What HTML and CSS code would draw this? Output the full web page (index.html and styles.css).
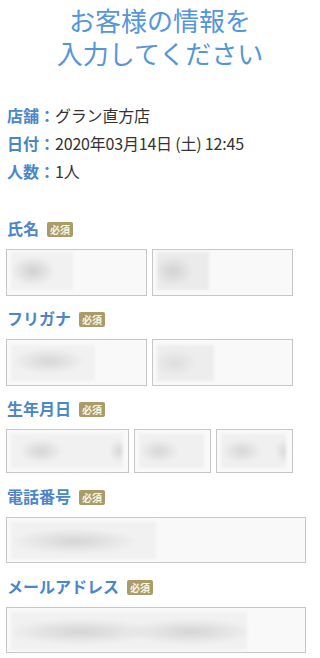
FILE: index.html
```html
<!DOCTYPE html>
<html lang="ja">
<head>
<meta charset="utf-8">
<title>お客様の情報を入力してください</title>
<link rel="stylesheet" href="styles.css">
</head>
<body>
<main class="page">
  <h1 class="title"><span class="tline">お客様の情報を</span><span class="tline">入力してください</span></h1>

  <dl class="info">
    <div class="info-row"><dt>店舗：</dt><dd>グラン直方店</dd></div>
    <div class="info-row"><dt>日付：</dt><dd>2020年03月14日 (土) 12:45</dd></div>
    <div class="info-row"><dt>人数：</dt><dd>1人</dd></div>
  </dl>

  <form class="form">
    <div class="field first">
      <div class="label">氏名<span class="req">必須</span></div>
      <div class="row">
        <div class="input w141 h47"><span class="fill f-name1"></span></div>
        <div class="input w141 h47"><span class="fill f-name2"></span></div>
      </div>
    </div>
    <div class="field">
      <div class="label">フリガナ<span class="req">必須</span></div>
      <div class="row">
        <div class="input w141 h47"><span class="fill f-kana1"></span></div>
        <div class="input w141 h47"><span class="fill f-kana2"></span></div>
      </div>
    </div>
    <div class="field">
      <div class="label">生年月日<span class="req">必須</span></div>
      <div class="row">
        <div class="input w123 h44"><span class="fill f-b1"></span></div>
        <div class="input w77 h44"><span class="fill f-b2"></span></div>
        <div class="input w77 h44"><span class="fill f-b3"></span></div>
      </div>
    </div>
    <div class="field wide">
      <div class="label">電話番号<span class="req">必須</span></div>
      <div class="row">
        <div class="input w300 h46"><span class="fill f-tel"></span></div>
      </div>
    </div>
    <div class="field wide">
      <div class="label">メールアドレス<span class="req">必須</span></div>
      <div class="row">
        <div class="input w300 h46"><span class="fill f-mail"></span></div>
      </div>
    </div>
  </form>
</main>
</body>
</html>
```

FILE: styles.css
```css
* { box-sizing: border-box; }

html, body {
  margin: 0;
  padding: 0;
  background: #ffffff;
}

body {
  font-family: "Noto Sans CJK JP", "Noto Sans", sans-serif;
  color: #333333;
}

.page {
  width: 320px;
  padding: 3px 6px 0 6px;
}

.title {
  margin: 0;
  font-size: 26px;
  font-weight: 400;
  text-align: center;
  color: #5596d8;
}

.tline {
  display: block;
  height: 33px;
  line-height: 33px;
}

.info {
  margin: 32px 0 0 1px;
  padding: 0;
}

.info-row {
  display: flex;
  font-size: 16px;
  line-height: 28px;
}

.info-row dt {
  font-weight: 700;
  color: #4a86c8;
}

.info-row dd {
  margin: 0;
  color: #333333;
  letter-spacing: -0.2px;
}

.form {
  margin: 0;
}

.field {
  margin-top: 12px;
}

.field.first {
  margin-top: 33px;
}

.field.wide {
  margin-top: 13px;
}

.label {
  display: flex;
  align-items: center;
  padding-left: 1px;
  font-size: 16px;
  line-height: 20px;
  font-weight: 700;
  color: #4a86c8;
  margin-bottom: 11px;
}

.req {
  display: inline-block;
  margin-left: 8px;
  margin-top: 3px;
  padding: 0 3px;
  height: 15px;
  line-height: 15px;
  font-size: 10px;
  font-weight: 700;
  color: #fbf6e2;
  background: #a99c68;
  border-radius: 2px;
}

.row {
  display: flex;
  gap: 5px;
}

.input {
  display: flex;
  align-items: flex-start;
  padding: 2px 4px;
  background: #f9f9f9;
  border: 1px solid #c6c6c6;
}

.w141 { width: 141px; }
.w123 { width: 123px; }
.w77 { width: 77px; }
.w300 { width: 300px; }
.h47 { height: 47px; }
.h46 { height: 46px; }
.h44 { height: 44px; }

.fill {
  display: block;
  height: 38px;
  filter: blur(1.5px);
}

.f-name1 {
  width: 62px;
  background:
    radial-gradient(22px 15px at 22px 50%, #d0d0d0, rgba(214,214,214,0)),
    #f1f1f1;
}
.f-name2 {
  width: 52px;
  background:
    radial-gradient(20px 15px at 16px 50%, #d2d2d2, rgba(214,214,214,0)),
    #ebebeb;
}
.f-kana1 {
  width: 84px;
  margin-top: 3px;
  height: 36px;
  background:
    radial-gradient(36px 13px at 38px 45%, #d6d6d6, rgba(217,217,217,0)),
    #f1f1f1;
}
.f-kana2 {
  width: 57px;
  margin-top: 3px;
  height: 36px;
  background:
    radial-gradient(22px 14px at 18px 50%, #dedede, rgba(226,226,226,0)),
    #ededed;
}
.f-b1 {
  width: 112px;
  height: 34px;
  margin-top: 2px;
  background:
    radial-gradient(22px 12px at 30px 50%, #d4d4d4, rgba(216,216,216,0)),
    radial-gradient(10px 12px at 108px 50%, #d8d8d8, rgba(220,220,220,0)),
    #f1f1f1;
}
.f-b2 {
  width: 65px;
  height: 34px;
  margin-top: 2px;
  background:
    radial-gradient(20px 12px at 20px 50%, #d6d6d6, rgba(218,218,218,0)),
    #f0f0f0;
}
.f-b3 {
  width: 65px;
  height: 34px;
  margin-top: 2px;
  background:
    radial-gradient(20px 12px at 21px 50%, #d6d6d6, rgba(218,218,218,0)),
    radial-gradient(10px 12px at 64px 50%, #d8d8d8, rgba(220,220,220,0)),
    #f0f0f0;
}
.f-tel {
  width: 145px;
  height: 37px;
  margin-top: 2px;
  background:
    radial-gradient(64px 13px at 64px 52%, #d5d5d5, rgba(217,217,217,0)),
    #f1f1f1;
}
.f-mail {
  width: 236px;
  height: 38px;
  margin-top: 2px;
  background:
    radial-gradient(75px 13px at 70px 52%, #d4d4d4, rgba(216,216,216,0)),
    radial-gradient(65px 13px at 180px 52%, #d4d4d4, rgba(216,216,216,0)),
    #f1f1f1;
}
```
